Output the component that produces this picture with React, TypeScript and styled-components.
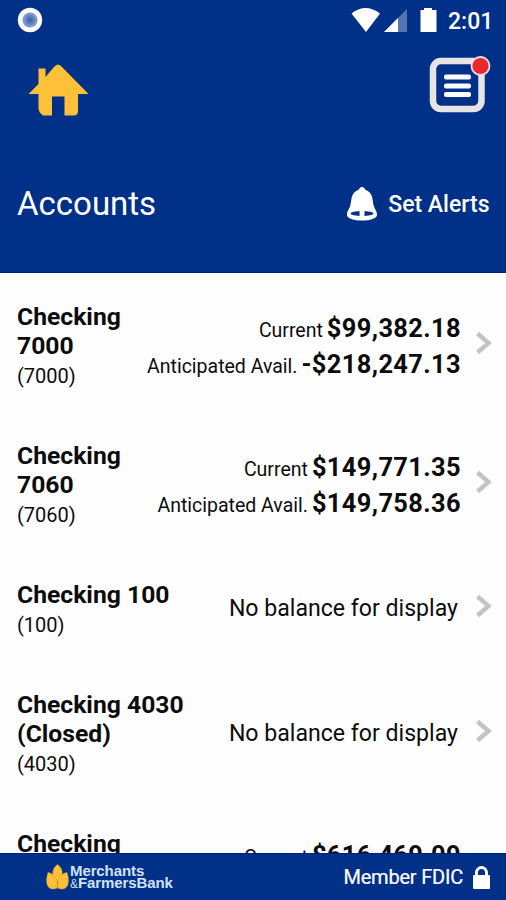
import React from "react";
import styled, { createGlobalStyle } from "styled-components";

const NAVY = "#003087";
const GOLD = "#fdc139";

const GlobalStyle = createGlobalStyle`
  * { box-sizing: border-box; }
  html, body { margin: 0; padding: 0; }
  body { font-family: Roboto, "Liberation Sans", sans-serif; color: #0c0c0c; background: #fefefe; }
`;

const Screen = styled.div`
  width: 506px;
  height: 900px;
  display: flex;
  flex-direction: column;
  overflow: hidden;
`;

const Header = styled.header`
  flex: none;
  height: 273px;
  background: ${NAVY};
  border-bottom: 1px solid #001f78;
  color: #fff;
`;

const StatusBar = styled.div`
  height: 40px;
  padding: 0 14px 0 17px;
  display: flex;
  align-items: center;
  justify-content: space-between;
`;

const StatusIcons = styled.div`
  display: flex;
  align-items: center;
`;

const Clock = styled.time`
  width: 44px;
  margin-left: 10px;
  font-size: 23px;
  font-weight: 500;
  line-height: 40px;
  white-space: nowrap;
  padding-top: 3px;
`;

const NavBar = styled.nav`
  height: 92px;
  padding: 14px 14px 0 28px;
  display: flex;
  justify-content: space-between;
  align-items: flex-start;
`;

const IconButton = styled.button`
  display: flex;
  padding: 0;
  border: 0;
  background: none;
  color: inherit;
`;

const TitleBar = styled.div`
  height: 143px;
  padding: 0 16px 0 17px;
  display: flex;
  align-items: center;
  justify-content: space-between;
`;

const PageTitle = styled.h1`
  margin: 0;
  font-size: 33px;
  font-weight: 400;
`;

const AlertsButton = styled(IconButton)`
  align-items: center;
  gap: 10.5px;
  padding: 1px 0.5px 0 0;
  font: 500 23px Roboto, sans-serif;
  white-space: nowrap;
`;

const AccountList = styled.main`
  flex: 1;
  min-height: 0;
  overflow: hidden;
`;

const AccountRow = styled.section<{ $tall: boolean }>`
  min-height: ${(p) => (p.$tall ? 139 : 110)}px;
  padding: 29px 14px 19px 17px;
  display: flex;
  align-items: stretch;
`;

const AccountName = styled.div`
  flex: none;
`;

const Name = styled.h2`
  margin: 0;
  font-size: 24.7px;
  font-weight: 700;
  line-height: 29px;
  white-space: pre-line;
`;

const AccountNumber = styled.div`
  font-size: 20px;
  line-height: 33px;
`;

const Balances = styled.div`
  flex: 1;
  display: flex;
  flex-direction: column;
  justify-content: center;
  align-items: flex-end;
  margin: -4px 14px 0 0;
`;

const Balance = styled.div`
  height: 36px;
  display: flex;
  align-items: baseline;
  gap: 4px;
  line-height: 36px;
  white-space: nowrap;
`;

const BalanceLabel = styled.span`
  font-size: 19.5px;
`;

const Amount = styled.strong`
  font-size: 25.4px;
  font-weight: 700;
  letter-spacing: 0.4px;
`;

const NoBalance = styled.div`
  font-size: 23.1px;
  line-height: 28px;
  margin: 0 3px 0 0;
  white-space: nowrap;
`;

const ChevronSlot = styled.div`
  display: flex;
  align-items: center;
  margin-top: -10px;
`;

const Footer = styled.footer`
  flex: none;
  height: 47px;
  padding: 0 15px 0 46px;
  display: flex;
  align-items: center;
  justify-content: space-between;
  background: ${NAVY};
  border-top: 1px solid #001f78;
  color: #fff;
`;

const Brand = styled.div`
  display: flex;
  align-items: center;
  gap: 1px;
`;

const BrandText = styled.div`
  font: 700 15px/12px "Liberation Sans", sans-serif;
  color: #d3e2fa;
  white-space: nowrap;
`;

const BrandLine = styled.div`
  height: 12px;
  letter-spacing: -0.1px;
`;

const Ampersand = styled.span`
  font-weight: 400;
  font-size: 12px;
`;

const Membership = styled.div`
  display: flex;
  align-items: center;
  gap: 9px;
  font-size: 20px;
  letter-spacing: -0.2px;
  -webkit-text-stroke: 0.2px #fff;
  white-space: nowrap;
`;

const RecordDot = () => (
  <svg width="26" height="26" viewBox="0 0 26 26">
    <circle cx="13" cy="13" r="12.2" fill="#fff" />
    <circle cx="13" cy="13" r="7.6" fill="#7f98cb" />
    <circle cx="13" cy="13" r="5" fill="#6280bc" />
    <circle cx="13" cy="13" r="2.4" fill="#4569ae" />
  </svg>
);

const Signals = () => (
  <svg width="88" height="28" viewBox="0 0 88 28">
    <path d="M1.500 7.500Q15.500-3.500 30 7.500L16 26Z" fill="#fff" />
    <path d="M57 3V26H34Z" fill="#5674b0" />
    <path d="M48 12V26H34Z" fill="#fff" />
    <path d="M74 4V2h8v2h4.500v22H70.500V4z" fill="#fff" />
  </svg>
);

const HomeIcon = () => (
  <svg width="62" height="64" viewBox="0 0 62 64">
    <path
      d="M.5 40L10.500 30V14.500h7V23L26 13Q30 8 34 13L60.500 40H50V57Q50 61.500 45.500 61.500H36.500V42.500H24V61.500H15Q10.500 58 10.500 54V40Z"
      fill={GOLD}
    />
  </svg>
);

const MenuIcon = () => (
  <svg width="64" height="62" viewBox="0 0 64 62">
    <rect x="5" y="7" width="48.500" height="48" rx="8" fill="none" stroke="#e5e5e5" strokeWidth="6.500" />
    <g fill="#fff">
      <rect x="16" y="20.500" width="27" height="5" rx="2" />
      <rect x="16" y="29.500" width="27" height="5" rx="2" />
      <rect x="16" y="38" width="27" height="5" rx="2" />
    </g>
    <circle cx="52.500" cy="12" r="9" fill="#e8292f" stroke="#f3dce4" strokeWidth="1.800" />
  </svg>
);

const BellIcon = () => (
  <svg width="32" height="34" viewBox="0 0 32 34">
    <path
      d="M16 0C13.800 0 13.500 2 12.500 2.700C4 6 6 14 4 19.500C3 22.500 1 24 1 28C1 31.500 8 33.500 16 33.500S31 31.500 31 28C31 24 29 22.500 28 19.500C26 14 28 6 19.500 2.700C18.500 2 18.200 0 16 0Z"
      fill="#fff"
    />
    <ellipse cx="16" cy="26.500" rx="11.500" ry="2.500" fill={NAVY} />
    <path d="M13.500 23h5v5.500q-2.500 2-5 0z" fill="#fff" />
  </svg>
);

const Chevron = () => (
  <svg width="17" height="24" viewBox="0 0 17 24">
    <path d="M2.500 2.500L13.500 12L2.500 21.500" fill="none" stroke="#c3c3c3" strokeWidth="4.400" />
  </svg>
);

const KernelLogo = () => (
  <svg width="23" height="26" viewBox="0 0 23 26">
    <g fill={GOLD} stroke="#dca338" strokeWidth=".5">
      <path d="M11.500 .5C17.500 5 18 12 11.500 18C5 12 5.500 5 11.500 .5Z" />
      <path d="M2 8.500C8 9.500 12 14 11.300 24C7 26 2 25 1 20C0 16 1 12 2 8.500Z" />
      <path d="M21 8.500C15 9.500 11 14 11.700 24C16 26 21 25 22 20C23 16 22 12 21 8.500Z" />
    </g>
  </svg>
);

const LockIcon = () => (
  <svg width="19" height="25" viewBox="0 0 19 25">
    <path d="M4.500 11V7.500a5 5 0 0 1 10 0V11" fill="none" stroke="#fff" strokeWidth="3" />
    <rect x="1" y="10" width="17" height="14" rx="1" fill="#fff" />
  </svg>
);

type Account = {
  name: string;
  number?: string;
  current?: string;
  available?: string;
};

const accounts: Account[] = [
  { name: "Checking\n7000", number: "(7000)", current: "$99,382.18", available: "-$218,247.13" },
  { name: "Checking\n7060", number: "(7060)", current: "$149,771.35", available: "$149,758.36" },
  { name: "Checking 100", number: "(100)" },
  { name: "Checking 4030\n(Closed)", number: "(4030)" },
  { name: "Checking", current: "$616,469.09" },
];

export default function App() {
  return (
    <Screen>
      <GlobalStyle />
      <Header>
        <StatusBar>
          <RecordDot />
          <StatusIcons>
            <Signals />
            <Clock>2:01</Clock>
          </StatusIcons>
        </StatusBar>
        <NavBar>
          <IconButton aria-label="Home"><HomeIcon /></IconButton>
          <IconButton aria-label="Menu"><MenuIcon /></IconButton>
        </NavBar>
        <TitleBar>
          <PageTitle>Accounts</PageTitle>
          <AlertsButton><BellIcon />Set Alerts</AlertsButton>
        </TitleBar>
      </Header>
      <AccountList>
        {accounts.map((account) => (
          <AccountRow key={account.name} $tall={Boolean(account.current)}>
            <AccountName>
              <Name>{account.name}</Name>
              {account.number && <AccountNumber>{account.number}</AccountNumber>}
            </AccountName>
            <Balances>
              {account.current ? (
                <>
                  <Balance>
                    <BalanceLabel>Current</BalanceLabel>
                    <Amount>{account.current}</Amount>
                  </Balance>
                  <Balance>
                    {account.available && (
                      <>
                        <BalanceLabel>Anticipated Avail.</BalanceLabel>
                        <Amount>{account.available}</Amount>
                      </>
                    )}
                  </Balance>
                </>
              ) : (
                <NoBalance>No balance for display</NoBalance>
              )}
            </Balances>
            <ChevronSlot><Chevron /></ChevronSlot>
          </AccountRow>
        ))}
      </AccountList>
      <Footer>
        <Brand>
          <KernelLogo />
          <BrandText>
            <BrandLine>Merchants</BrandLine>
            <BrandLine><Ampersand>&amp;</Ampersand>FarmersBank</BrandLine>
          </BrandText>
        </Brand>
        <Membership>Member FDIC<LockIcon /></Membership>
      </Footer>
    </Screen>
  );
}
